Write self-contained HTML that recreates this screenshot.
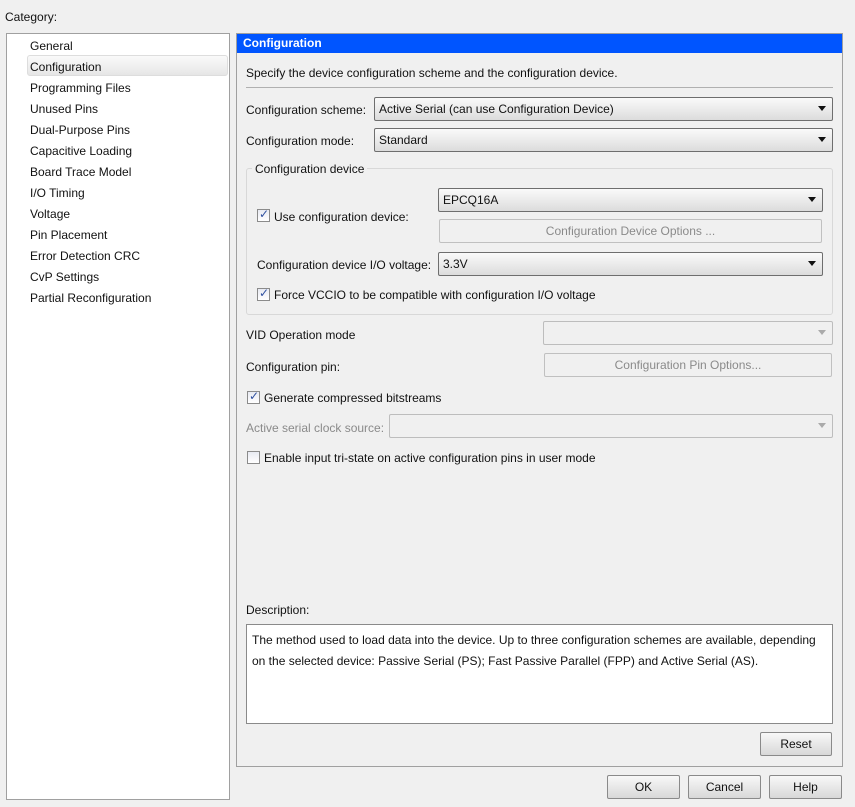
<!DOCTYPE html>
<html><head><meta charset="utf-8"><style>
*{box-sizing:border-box;margin:0;padding:0}
body{width:855px;height:807px;background:#f0f0f0;font-family:"Liberation Sans","DejaVu Sans",sans-serif;font-size:12px;color:#111;position:relative;overflow:hidden}
.a{position:absolute;white-space:nowrap}
.combo{position:absolute;height:24px;border:1px solid #6e6e6e;border-radius:2px;background:linear-gradient(#fafafa,#dcdcdc);padding:4px 4px;line-height:14px}
.combo::after{content:"";position:absolute;right:6px;top:8px;border-left:4px solid transparent;border-right:4px solid transparent;border-top:5px solid #111}
.dis{border-color:#bdbdbd;background:#f0f0f0}
.dis::after{border-top-color:#aaa}
.btn{position:absolute;height:24px;border:1px solid #8a8a8a;border-radius:2px;background:linear-gradient(#f8f8f8,#d8d8d8);text-align:center;line-height:22px}
.dbtn{border-color:#c0c0c0;background:#f0f0f0;color:#8a8a8a}
.cb{position:absolute;width:13px;height:13px;border:1px solid #8b8b8b;background:linear-gradient(#e8eaf2,#fff)}
.cb.on::after{content:"✓";position:absolute;left:1px;top:-3px;font-size:12px;color:#3050a0;font-weight:bold}
.item{position:absolute;left:30px}
</style></head><body>
<div class="a" style="left:5px;top:10px">Category:</div>
<div class="a" style="left:6px;top:33px;width:224px;height:767px;background:#fff;border:1px solid #a0a0a0"></div>
<div class="a" style="left:27px;top:55px;width:201px;height:21px;border:1px solid #ddd;border-radius:3px;background:linear-gradient(#fafafa,#e6e6e6)"></div>
<div class="item a" style="top:39px">General</div>
<div class="item a" style="top:60px">Configuration</div>
<div class="item a" style="top:81px">Programming Files</div>
<div class="item a" style="top:102px">Unused Pins</div>
<div class="item a" style="top:123px">Dual-Purpose Pins</div>
<div class="item a" style="top:144px">Capacitive Loading</div>
<div class="item a" style="top:165px">Board Trace Model</div>
<div class="item a" style="top:186px">I/O Timing</div>
<div class="item a" style="top:207px">Voltage</div>
<div class="item a" style="top:228px">Pin Placement</div>
<div class="item a" style="top:249px">Error Detection CRC</div>
<div class="item a" style="top:270px">CvP Settings</div>
<div class="item a" style="top:291px">Partial Reconfiguration</div>

<div class="a" style="left:236px;top:33px;width:607px;height:734px;border:1px solid #a0a0a0"></div>
<div class="a" style="left:237px;top:34px;width:605px;height:19px;background:#0055ff;color:#fff;font-weight:bold;padding:3px 6px;line-height:13px">Configuration</div>
<div class="a" style="left:246px;top:66px">Specify the device configuration scheme and the configuration device.</div>
<div class="a" style="left:246px;top:87px;width:587px;height:1px;background:#b0b0b0"></div>
<div class="a" style="left:246px;top:103px">Configuration scheme:</div>
<div class="combo" style="left:374px;top:97px;width:459px">Active Serial (can use Configuration Device)</div>
<div class="a" style="left:246px;top:134px">Configuration mode:</div>
<div class="combo" style="left:374px;top:128px;width:459px">Standard</div>

<div class="a" style="left:246px;top:168px;width:587px;height:147px;border:1px solid #d8d8d8;border-radius:3px"></div>
<div class="a" style="left:252px;top:162px;background:#f0f0f0;padding:0 3px">Configuration device</div>
<div class="cb on" style="left:257px;top:209px"></div>
<div class="a" style="left:274px;top:210px">Use configuration device:</div>
<div class="combo" style="left:438px;top:188px;width:385px">EPCQ16A</div>
<div class="btn dbtn" style="left:439px;top:219px;width:383px">Configuration Device Options ...</div>
<div class="a" style="left:257px;top:258px">Configuration device I/O voltage:</div>
<div class="combo" style="left:438px;top:252px;width:385px">3.3V</div>
<div class="cb on" style="left:257px;top:288px"></div>
<div class="a" style="left:274px;top:288px">Force VCCIO to be compatible with configuration I/O voltage</div>

<div class="a" style="left:246px;top:328px">VID Operation mode</div>
<div class="combo dis" style="left:543px;top:321px;width:290px"></div>
<div class="a" style="left:246px;top:360px">Configuration pin:</div>
<div class="btn dbtn" style="left:544px;top:353px;width:288px">Configuration Pin Options...</div>
<div class="cb on" style="left:247px;top:391px"></div>
<div class="a" style="left:264px;top:391px">Generate compressed bitstreams</div>
<div class="a" style="left:246px;top:421px;color:#8a8a8a">Active serial clock source:</div>
<div class="combo dis" style="left:389px;top:414px;width:444px"></div>
<div class="cb" style="left:247px;top:451px"></div>
<div class="a" style="left:264px;top:451px">Enable input tri-state on active configuration pins in user mode</div>

<div class="a" style="left:246px;top:603px">Description:</div>
<div class="a" style="left:246px;top:624px;width:587px;height:100px;background:#fff;border:1px solid #8a8a8a;padding:5px 5px;white-space:normal;line-height:21px">The method used to load data into the device. Up to three configuration schemes are available, depending on the selected device: Passive Serial (PS); Fast Passive Parallel (FPP) and Active Serial (AS).</div>
<div class="btn" style="left:760px;top:732px;width:72px">Reset</div>
<div class="btn" style="left:607px;top:775px;width:73px">OK</div>
<div class="btn" style="left:688px;top:775px;width:73px">Cancel</div>
<div class="btn" style="left:769px;top:775px;width:73px">Help</div>
</body></html>
